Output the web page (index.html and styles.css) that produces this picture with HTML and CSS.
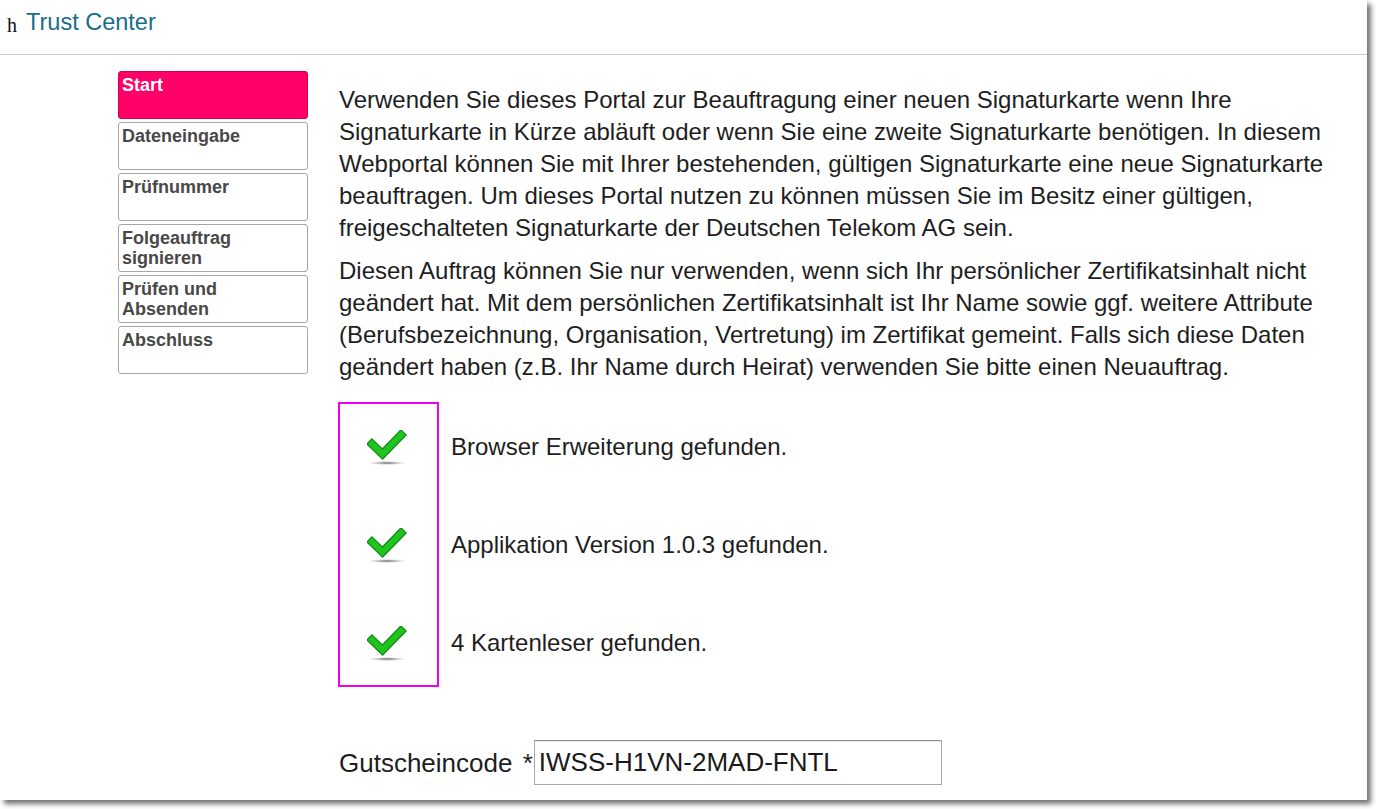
FILE: index.html
```html
<!DOCTYPE html>
<html lang="de">
<head>
<meta charset="utf-8">
<title>Trust Center</title>
<link rel="stylesheet" href="styles.css">
</head>
<body>
<div class="window">
  <header class="header">
    <span class="logo-alt">h</span><span class="brand">Trust Center</span>
  </header>
  <div class="content">
    <nav class="steps">
      <div class="step step-active">Start</div>
      <div class="step">Dateneingabe</div>
      <div class="step">Prüfnummer</div>
      <div class="step">Folgeauftrag signieren</div>
      <div class="step">Prüfen und Absenden</div>
      <div class="step">Abschluss</div>
    </nav>
    <main class="main">
      <p class="para">Verwenden Sie dieses Portal zur Beauftragung einer neuen Signaturkarte wenn Ihre Signaturkarte in Kürze abläuft oder wenn Sie eine zweite Signaturkarte benötigen. In diesem Webportal können Sie mit Ihrer bestehenden, gültigen Signaturkarte eine neue Signaturkarte beauftragen. Um dieses Portal nutzen zu können müssen Sie im Besitz einer gültigen, freigeschalteten Signaturkarte der Deutschen Telekom AG sein.</p>
      <p class="para">Diesen Auftrag können Sie nur verwenden, wenn sich Ihr persönlicher Zertifikatsinhalt nicht geändert hat. Mit dem persönlichen Zertifikatsinhalt ist Ihr Name sowie ggf. weitere Attribute (Berufsbezeichnung, Organisation, Vertretung) im Zertifikat gemeint. Falls sich diese Daten geändert haben (z.B. Ihr Name durch Heirat) verwenden Sie bitte einen Neuauftrag.</p>

      <div class="checks">
        <div class="check-icons">
          <div class="check-cell">
            <svg class="check" width="40" height="36" viewBox="0 0 40 36">
              <defs>
                <radialGradient id="sh1" cx="50%" cy="50%" r="50%">
                  <stop offset="0%" stop-color="#555" stop-opacity="0.9"/>
                  <stop offset="100%" stop-color="#999" stop-opacity="0"/>
                </radialGradient>
              </defs>
              <ellipse cx="20" cy="33" rx="19" ry="2" fill="url(#sh1)"/>
              <polyline points="5,14 15.5,24 34,5" fill="none" stroke="#0f8a16" stroke-width="8.5" stroke-linecap="square" stroke-linejoin="miter"/>
              <polyline points="5,14 15.5,24 34,5" fill="none" stroke="#1fc41f" stroke-width="6" stroke-linecap="square" stroke-linejoin="miter"/>
            </svg>
          </div>
          <div class="check-cell">
            <svg class="check" width="40" height="36" viewBox="0 0 40 36">
              <ellipse cx="20" cy="33" rx="19" ry="2" fill="url(#sh1)"/>
              <polyline points="5,14 15.5,24 34,5" fill="none" stroke="#0f8a16" stroke-width="8.5" stroke-linecap="square" stroke-linejoin="miter"/>
              <polyline points="5,14 15.5,24 34,5" fill="none" stroke="#1fc41f" stroke-width="6" stroke-linecap="square" stroke-linejoin="miter"/>
            </svg>
          </div>
          <div class="check-cell">
            <svg class="check" width="40" height="36" viewBox="0 0 40 36">
              <ellipse cx="20" cy="33" rx="19" ry="2" fill="url(#sh1)"/>
              <polyline points="5,14 15.5,24 34,5" fill="none" stroke="#0f8a16" stroke-width="8.5" stroke-linecap="square" stroke-linejoin="miter"/>
              <polyline points="5,14 15.5,24 34,5" fill="none" stroke="#1fc41f" stroke-width="6" stroke-linecap="square" stroke-linejoin="miter"/>
            </svg>
          </div>
        </div>
        <div class="check-labels">
          <div class="check-label">Browser Erweiterung gefunden.</div>
          <div class="check-label">Applikation Version 1.0.3 gefunden.</div>
          <div class="check-label">4 Kartenleser gefunden.</div>
        </div>
      </div>

      <div class="voucher">
        <label class="voucher-label" for="code">Gutscheincode <span class="req">*</span></label><input id="code" class="voucher-input" type="text" value="IWSS-H1VN-2MAD-FNTL">
      </div>
    </main>
  </div>
</div>
</body>
</html>
```

FILE: styles.css
```css
html, body {
  margin: 0;
  padding: 0;
  background: #ffffff;
}

body {
  width: 1376px;
  height: 809px;
  overflow: hidden;
}

.window {
  width: 1367px;
  height: 800px;
  background: #ffffff;
  box-shadow: 4px 4px 5px rgba(0, 0, 0, 0.55);
  overflow: hidden;
  font-family: "Liberation Sans", Arial, sans-serif;
  color: #1e1e1e;
}

.header {
  box-sizing: border-box;
  height: 55px;
  border-bottom: 1px solid #c8c8c8;
  padding: 8px 0 0 7px;
  line-height: 28px;
  white-space: nowrap;
}

.logo-alt {
  font-family: "Liberation Serif", "Times New Roman", serif;
  font-size: 20px;
  color: #111;
  vertical-align: -2px;
  margin-right: 9px;
}

.brand {
  font-size: 23.5px;
  color: #186e89;
}

.content {
  display: flex;
  padding: 16px 22px 0 118px;
}

.steps {
  width: 190px;
  flex: none;
  display: flex;
  flex-direction: column;
  gap: 3px;
}

.step {
  box-sizing: border-box;
  height: 48px;
  border: 1px solid #a6a6a6;
  border-radius: 3px;
  padding: 3px 3px 0;
  font-size: 18px;
  line-height: 20px;
  font-weight: bold;
  color: #484848;
  background: #fff;
}

.step-active {
  background: #ff0066;
  border-color: #cf0055;
  color: #ffffff;
  padding-top: 3px;
}

.main {
  flex: 1;
  padding: 13px 0 0 31px;
}

.para {
  margin: 0 0 11px;
  font-size: 24px;
  line-height: 32px;
}

.checks {
  display: flex;
  margin-top: 19px;
  margin-left: -1px;
}

.check-icons {
  width: 97px;
  border: 2px solid #f000f0;
  display: flex;
  flex-direction: column;
  gap: 13px;
}

.check-cell {
  height: 85px;
  display: flex;
  align-items: center;
  justify-content: center;
}

.check {
  display: block;
  margin-left: -4px;
  margin-top: 2px;
}

.check-labels {
  display: flex;
  flex-direction: column;
  gap: 13px;
  padding: 2px 0 0 12px;
}

.check-label {
  height: 85px;
  display: flex;
  align-items: center;
  font-size: 24px;
  line-height: 28px;
}

.voucher {
  display: flex;
  align-items: center;
  margin-top: 53px;
}

.voucher-label {
  font-size: 26px;
  line-height: 30px;
  color: #1e1e1e;
  margin-right: 1px;
}

.req {
  margin-left: 3px;
}

.voucher-input {
  box-sizing: border-box;
  width: 408px;
  height: 45px;
  margin: 0;
  padding: 0 4px;
  border: 1px solid #a8a8a8;
  border-top-color: #8c8c8c;
  border-radius: 0;
  box-shadow: inset 0 1px 1px rgba(0, 0, 0, 0.08);
  font-family: "Liberation Sans", Arial, sans-serif;
  font-size: 26px;
  color: #1a1a1a;
  background: #fff;
  outline: none;
}
```
